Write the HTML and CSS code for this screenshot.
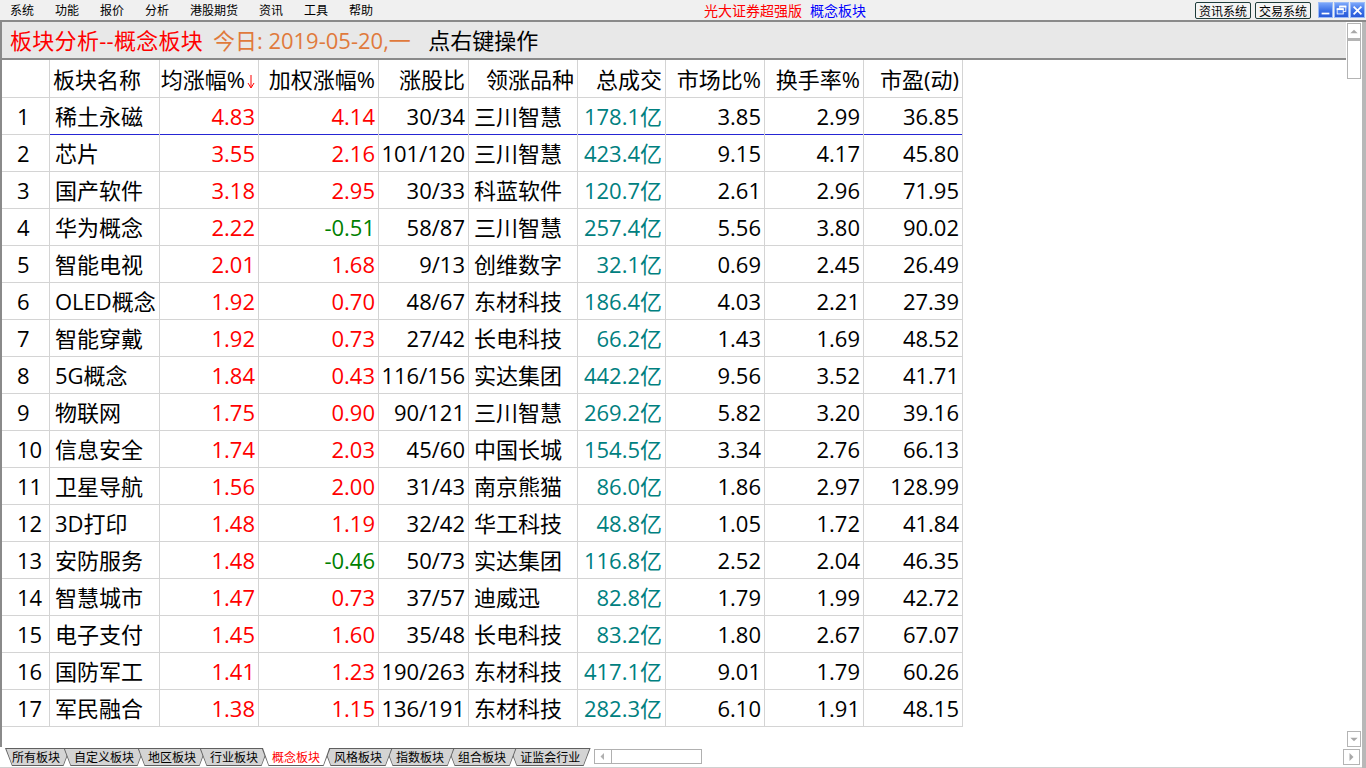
FILE: index.html
```html
<!DOCTYPE html>
<html lang="zh-CN">
<head>
<meta charset="utf-8">
<title>板块分析--概念板块</title>
<link rel="stylesheet" href="styles.css">
</head>
<body>
<div class="menubar">
  <div class="menus">
    <span class="menu">系统</span><span class="menu">功能</span><span class="menu">报价</span><span class="menu">分析</span><span class="menu">港股期货</span><span class="menu">资讯</span><span class="menu">工具</span><span class="menu">帮助</span>
  </div>
  <div class="apptitle"><span class="brand">光大证券超强版</span><span class="section">概念板块</span></div>
  <div class="sysbtns">
    <span class="sysbtn">资讯系统</span><span class="sysbtn">交易系统</span>
    <span class="wbtn"><svg width="15" height="15" viewBox="0 0 15 15"><rect x="3" y="10" width="9" height="2" fill="#fff"/></svg></span>
    <span class="wbtn"><svg width="15" height="15" viewBox="0 0 15 15"><rect x="5.5" y="2.5" width="7" height="6" fill="none" stroke="#fff"/><rect x="5" y="2" width="8" height="2" fill="#fff"/><rect x="2.5" y="5.5" width="7" height="6" fill="#4a7ff0" stroke="#fff"/><rect x="2" y="5" width="8" height="2" fill="#fff"/></svg></span>
    <span class="wbtn"><svg width="15" height="15" viewBox="0 0 15 15"><path d="M3 3 L12 12 M12 3 L3 12" stroke="#fff" stroke-width="2"/></svg></span>
  </div>
</div>

<div class="frame">
  <div class="leftcol">
    <div class="upper">
      <div class="workspace">
        <div class="titlebar"><span class="t-red">板块分析--概念板块</span> <span class="t-orange">今日: 2019-05-20,一</span>  <span class="t-black">点右键操作</span></div>
        <div class="grid">
          <div class="row head">
            <div class="c idx"></div>
            <div class="c name">板块名称</div>
            <div class="c num">均涨幅%<svg class="sortarrow" width="8" height="15" viewBox="0 0 8 15"><path d="M4 1 V13" stroke="#f00" stroke-width="1"/><path d="M1 9 L4 14 L7 9" fill="none" stroke="#f00" stroke-width="1"/></svg></div>
            <div class="c num">加权涨幅%</div>
            <div class="c num">涨股比</div>
            <div class="c num">领涨品种</div>
            <div class="c num">总成交</div>
            <div class="c num">市场比%</div>
            <div class="c num">换手率%</div>
            <div class="c num">市盈(动)</div>
          </div>
          <div class="row sel"><div class="c idx">1</div><div class="c name">稀土永磁</div><div class="c num up">4.83</div><div class="c num up">4.14</div><div class="c num">30/34</div><div class="c lead">三川智慧</div><div class="c num amt">178.1亿</div><div class="c num">3.85</div><div class="c num">2.99</div><div class="c num">36.85</div></div>
          <div class="row"><div class="c idx">2</div><div class="c name">芯片</div><div class="c num up">3.55</div><div class="c num up">2.16</div><div class="c num">101/120</div><div class="c lead">三川智慧</div><div class="c num amt">423.4亿</div><div class="c num">9.15</div><div class="c num">4.17</div><div class="c num">45.80</div></div>
          <div class="row"><div class="c idx">3</div><div class="c name">国产软件</div><div class="c num up">3.18</div><div class="c num up">2.95</div><div class="c num">30/33</div><div class="c lead">科蓝软件</div><div class="c num amt">120.7亿</div><div class="c num">2.61</div><div class="c num">2.96</div><div class="c num">71.95</div></div>
          <div class="row"><div class="c idx">4</div><div class="c name">华为概念</div><div class="c num up">2.22</div><div class="c num down">-0.51</div><div class="c num">58/87</div><div class="c lead">三川智慧</div><div class="c num amt">257.4亿</div><div class="c num">5.56</div><div class="c num">3.80</div><div class="c num">90.02</div></div>
          <div class="row"><div class="c idx">5</div><div class="c name">智能电视</div><div class="c num up">2.01</div><div class="c num up">1.68</div><div class="c num">9/13</div><div class="c lead">创维数字</div><div class="c num amt">32.1亿</div><div class="c num">0.69</div><div class="c num">2.45</div><div class="c num">26.49</div></div>
          <div class="row"><div class="c idx">6</div><div class="c name">OLED概念</div><div class="c num up">1.92</div><div class="c num up">0.70</div><div class="c num">48/67</div><div class="c lead">东材科技</div><div class="c num amt">186.4亿</div><div class="c num">4.03</div><div class="c num">2.21</div><div class="c num">27.39</div></div>
          <div class="row"><div class="c idx">7</div><div class="c name">智能穿戴</div><div class="c num up">1.92</div><div class="c num up">0.73</div><div class="c num">27/42</div><div class="c lead">长电科技</div><div class="c num amt">66.2亿</div><div class="c num">1.43</div><div class="c num">1.69</div><div class="c num">48.52</div></div>
          <div class="row"><div class="c idx">8</div><div class="c name">5G概念</div><div class="c num up">1.84</div><div class="c num up">0.43</div><div class="c num">116/156</div><div class="c lead">实达集团</div><div class="c num amt">442.2亿</div><div class="c num">9.56</div><div class="c num">3.52</div><div class="c num">41.71</div></div>
          <div class="row"><div class="c idx">9</div><div class="c name">物联网</div><div class="c num up">1.75</div><div class="c num up">0.90</div><div class="c num">90/121</div><div class="c lead">三川智慧</div><div class="c num amt">269.2亿</div><div class="c num">5.82</div><div class="c num">3.20</div><div class="c num">39.16</div></div>
          <div class="row"><div class="c idx">10</div><div class="c name">信息安全</div><div class="c num up">1.74</div><div class="c num up">2.03</div><div class="c num">45/60</div><div class="c lead">中国长城</div><div class="c num amt">154.5亿</div><div class="c num">3.34</div><div class="c num">2.76</div><div class="c num">66.13</div></div>
          <div class="row"><div class="c idx">11</div><div class="c name">卫星导航</div><div class="c num up">1.56</div><div class="c num up">2.00</div><div class="c num">31/43</div><div class="c lead">南京熊猫</div><div class="c num amt">86.0亿</div><div class="c num">1.86</div><div class="c num">2.97</div><div class="c num">128.99</div></div>
          <div class="row"><div class="c idx">12</div><div class="c name">3D打印</div><div class="c num up">1.48</div><div class="c num up">1.19</div><div class="c num">32/42</div><div class="c lead">华工科技</div><div class="c num amt">48.8亿</div><div class="c num">1.05</div><div class="c num">1.72</div><div class="c num">41.84</div></div>
          <div class="row"><div class="c idx">13</div><div class="c name">安防服务</div><div class="c num up">1.48</div><div class="c num down">-0.46</div><div class="c num">50/73</div><div class="c lead">实达集团</div><div class="c num amt">116.8亿</div><div class="c num">2.52</div><div class="c num">2.04</div><div class="c num">46.35</div></div>
          <div class="row"><div class="c idx">14</div><div class="c name">智慧城市</div><div class="c num up">1.47</div><div class="c num up">0.73</div><div class="c num">37/57</div><div class="c lead">迪威迅</div><div class="c num amt">82.8亿</div><div class="c num">1.79</div><div class="c num">1.99</div><div class="c num">42.72</div></div>
          <div class="row"><div class="c idx">15</div><div class="c name">电子支付</div><div class="c num up">1.45</div><div class="c num up">1.60</div><div class="c num">35/48</div><div class="c lead">长电科技</div><div class="c num amt">83.2亿</div><div class="c num">1.80</div><div class="c num">2.67</div><div class="c num">67.07</div></div>
          <div class="row"><div class="c idx">16</div><div class="c name">国防军工</div><div class="c num up">1.41</div><div class="c num up">1.23</div><div class="c num">190/263</div><div class="c lead">东材科技</div><div class="c num amt">417.1亿</div><div class="c num">9.01</div><div class="c num">1.79</div><div class="c num">60.26</div></div>
          <div class="row"><div class="c idx">17</div><div class="c name">军民融合</div><div class="c num up">1.38</div><div class="c num up">1.15</div><div class="c num">136/191</div><div class="c lead">东材科技</div><div class="c num amt">282.3亿</div><div class="c num">6.10</div><div class="c num">1.91</div><div class="c num">48.15</div></div>
        </div>
      </div>
      <div class="vscroll">
        <div class="sbtn"><svg width="13" height="13" viewBox="0 0 13 13"><path d="M2.5 8.5 L6.5 4.5 L10.5 8.5 Z" fill="#a8a8a8"/></svg></div>
        <div class="thumb"></div>
        <div class="track"></div>
        <div class="sbtn"><svg width="13" height="13" viewBox="0 0 13 13"><path d="M2.5 4.5 L6.5 8.5 L10.5 4.5 Z" fill="#a8a8a8"/></svg></div>
      </div>
    </div>
    <div class="bottom">
      <div class="tabs">
        <div class="tab first z1"><span>所有板块</span></div>
        <div class="tab z2"><span>自定义板块</span></div>
        <div class="tab z3"><span>地区板块</span></div>
        <div class="tab z4"><span>行业板块</span></div>
        <div class="tab active"><span>概念板块</span></div>
        <div class="tab z4"><span>风格板块</span></div>
        <div class="tab z3"><span>指数板块</span></div>
        <div class="tab z2"><span>组合板块</span></div>
        <div class="tab z1"><span>证监会行业</span></div>
      </div>
      <div class="hscroll">
        <div class="hbtn"><svg width="16" height="13" viewBox="0 0 16 13"><path d="M9 3 L5.5 6.5 L9 10 Z" fill="#b0b0b0"/></svg></div>
        <div class="htrack"></div>
      </div>
      <div class="spacer"></div>
      <div class="rbtn"><svg width="15" height="14" viewBox="0 0 15 14"><path d="M5.5 3 L9.5 7 L5.5 11 Z" fill="#a8a8a8"/></svg></div>
    </div>
  </div>
  <div class="rbar"></div>
</div>
</body>
</html>
```
FILE: styles.css
```css
* { box-sizing: border-box; }
html, body { margin: 0; padding: 0; }
body {
  width: 1366px;
  height: 768px;
  overflow: hidden;
  background: #ffffff;
  font-family: "Noto Sans CJK SC", "Noto Sans", sans-serif;
  color: #000;
  display: flex;
  flex-direction: column;
}

/* ---------- menu bar ---------- */
.menubar {
  height: 20px;
  background: #f0f0f0;
  display: flex;
  align-items: center;
  font-size: 12px;
}
.menus { display: flex; gap: 21px; padding-left: 10px; }
.menu { line-height: 20px; }
.apptitle {
  flex: 1;
  text-align: center;
  font-size: 14px;
  line-height: 20px;
  padding-left: 2px;
}
.brand { color: #ff0000; margin-right: 8px; }
.section { color: #0000ff; }
.sysbtns { display: flex; align-items: center; padding-right: 1px; }
.sysbtn {
  height: 17px;
  line-height: 15px;
  border: 1px solid #1e3c3a;
  border-radius: 2px;
  padding: 0 3px;
  margin-right: 4px;
  font-size: 12px;
  background: #f4f4f4;
}
.sysbtn + .sysbtn { margin-right: 6px; }
.wbtn {
  width: 15px;
  height: 16px;
  margin-left: 1px;
  background: linear-gradient(#7aa6fa, #3a6fe6 55%, #2a5ad8);
  border: 1px solid #9cbcf8;
  display: flex;
  align-items: center;
  justify-content: center;
}
.wbtn svg { display: block; }

/* ---------- frame ---------- */
.frame { display: flex; height: 748px; }
.leftcol { width: 1362px; display: flex; flex-direction: column; }
.rbar { width: 4px; background: #b8b8b8; border-top: 2px solid #8a8a8a; }
.upper { height: 727px; display: flex; }
.workspace {
  width: 1346px;
  border-left: 2px solid #8a8a8a;
  border-top: 2px solid #8a8a8a;
  display: flex;
  flex-direction: column;
}
.titlebar {
  height: 38px;
  background: #e8e8e8;
  border-bottom: 2px solid #8a8a8a;
  font-family: "Open Sans", "Noto Sans CJK SC", sans-serif;
  font-size: 22px;
  line-height: 36px;
  padding-left: 8px;
  white-space: pre;
}
.t-red { color: #ff0000; letter-spacing: 0.3px; }
.t-orange { color: #e07a3c; margin-left: 4px; }
.t-black { color: #000; margin-left: 6px; }

/* ---------- grid ---------- */
.grid { display: flex; flex-direction: column; }
.row {
  display: grid;
  grid-template-columns: 48px 110px 99px 120px 90px 109px 88px 99px 99px 99px;
  height: 37px;
}
.c {
  border-right: 1px solid #d4d4d4;
  border-bottom: 1px solid #d4d4d4;
  font-family: "Open Sans", "Noto Sans CJK SC", sans-serif;
  font-size: 22px;
  line-height: 36px;
  padding-top: 1px;
  white-space: nowrap;
  overflow: visible;
}
.idx { padding-left: 15px; }
.name { padding-left: 5px; }
.head .name { padding-left: 3px; }
.lead { padding-left: 5px; }
.num { text-align: right; padding-right: 3px; }
.head .num { padding-right: 3px; }
.sortarrow { vertical-align: -1px; margin-left: 2px; }
.up { color: #ff0000; }
.down { color: #008000; }
.amt { color: #008080; }
.row.sel .c.name, .row.sel .c.num, .row.sel .c.lead { border-bottom-color: #2626d4; }

/* ---------- vertical scrollbar ---------- */
.vscroll {
  width: 16px;
  border-top: 2px solid #8a8a8a;
  background: #fff;
  display: flex;
  flex-direction: column;
  padding: 1px 1px 0 1px;
}
.sbtn {
  height: 16px;
  border: 1px solid #b4b4b4;
  display: flex;
  align-items: center;
  justify-content: center;
}
.thumb { height: 40px; border: 1px solid #b4b4b4; border-top: 2px solid #b4b4b4; }
.track { flex: 1; }

/* ---------- bottom tabs ---------- */
.bottom {
  height: 21px;
  display: flex;
  align-items: flex-start;
  border-bottom: 1px solid #d0d0d0;
}
.tabs { display: flex; padding-left: 5px; padding-top: 1px; }
.tab {
  position: relative;
  height: 18px;
  padding: 0 10.5px;
  margin-right: -7px;
  font-size: 12px;
  line-height: 18px;
  background: #606060;
  clip-path: polygon(0 0, 100% 0, calc(100% - 7px) 100%, 7px 100%);
}
.tab.first { padding-left: 7px; }
.tab::before {
  content: "";
  position: absolute;
  inset: 0;
  background: #d4d4d4;
  clip-path: polygon(1.4px 1px, calc(100% - 1.4px) 1px, calc(100% - 7.3px) calc(100% - 1px), 7.3px calc(100% - 1px));
}
.tab span { position: relative; }
.z1 { z-index: 1; }
.z2 { z-index: 2; }
.z3 { z-index: 3; }
.z4 { z-index: 4; }
.tab.active { z-index: 10; color: #ff0000; }
.tab.active::before {
  background: #ffffff;
  clip-path: polygon(1.4px 0, calc(100% - 1.4px) 0, calc(100% - 7.3px) calc(100% - 1px), 7.3px calc(100% - 1px));
}
.hscroll {
  margin-left: 10px;
  margin-top: 2px;
  width: 108px;
  height: 15px;
  border: 1px solid #b0b0b0;
  display: flex;
}
.hbtn { width: 17px; border-right: 1px solid #b0b0b0; display: flex; align-items: center; }
.htrack { flex: 1; }
.spacer { flex: 1; }
.rbtn {
  width: 17px;
  height: 16px;
  margin-top: 2px;
  margin-right: 2px;
  border: 1px solid #b4b4b4;
  display: flex;
  align-items: center;
  justify-content: center;
}
```
